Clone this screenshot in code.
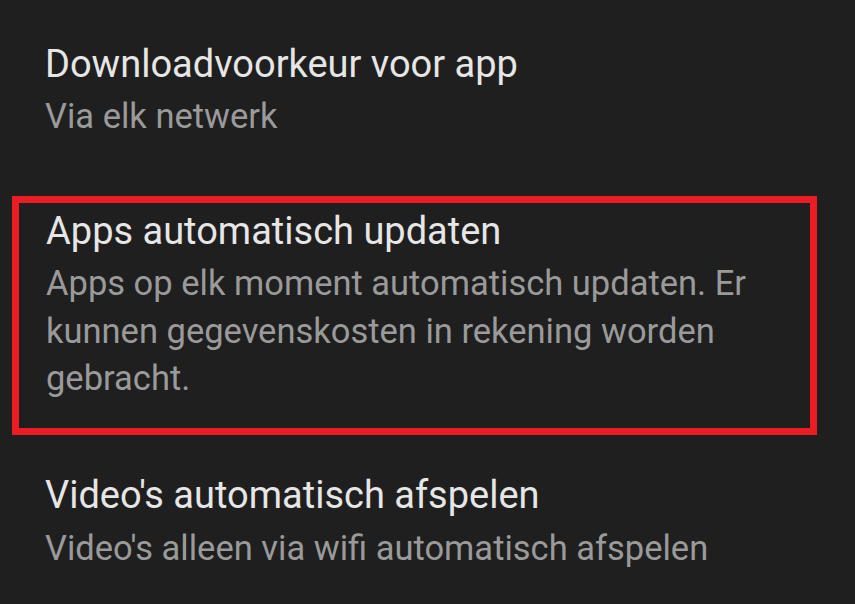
export default function App() {
  return (
    <div className="w-[855px] h-[604px] bg-[#1f1f1f] overflow-hidden" style={{ fontFamily: 'Roboto, "Noto Sans", sans-serif' }}>
      <div className="pt-[40px] pl-[45px]">
        <div className="text-[38px] leading-[48px] text-[#e6e6e6]">Downloadvoorkeur voor app</div>
        <div className="mt-[4px] text-[34.5px] leading-[48px] text-[#9a9a9a]">Via elk netwerk</div>
      </div>
      <div className="mt-[56px] ml-[12px] w-[805px] h-[239px] border-[7px] border-[#ec1c24] pl-[27px] pr-[40px] pt-[4px]">
        <div className="text-[38px] leading-[48px] text-[#e6e6e6]">Apps automatisch updaten</div>
        <div className="mt-[5px] text-[34.5px] leading-[47.5px] text-[#9a9a9a]">
          Apps op elk moment automatisch updaten. Er kunnen gegevenskosten in rekening worden gebracht.
        </div>
      </div>
      <div className="pt-[36px] pl-[45px]">
        <div className="text-[38px] leading-[48px] text-[#e6e6e6]">Video's automatisch afspelen</div>
        <div className="mt-[5px] text-[34.5px] leading-[48px] text-[#9a9a9a]">Video's alleen via wifi automatisch afspelen</div>
      </div>
    </div>
  );
}
